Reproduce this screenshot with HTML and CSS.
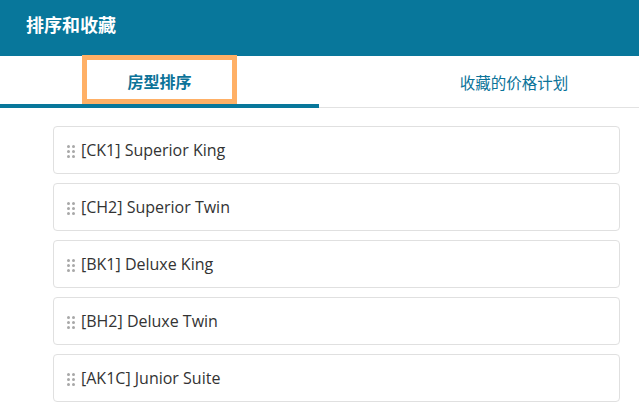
FILE: index.html
```html
<!DOCTYPE html>
<html lang="zh">
<head>
<meta charset="utf-8">
<link rel="stylesheet" href="styles.css">
</head>
<body>
<header class="topbar">排序和收藏</header>
<nav class="tabs">
  <div class="tab active"><span class="tab-label">房型排序</span></div>
  <div class="tab second"><span class="tab-text">收藏的价格计划</span></div>
</nav>
<ul class="list">
  <li class="item"><span class="grip"><i></i><i></i><i></i><i></i><i></i><i></i></span>[CK1] Superior King</li>
  <li class="item"><span class="grip"><i></i><i></i><i></i><i></i><i></i><i></i></span>[CH2] Superior Twin</li>
  <li class="item"><span class="grip"><i></i><i></i><i></i><i></i><i></i><i></i></span>[BK1] Deluxe King</li>
  <li class="item"><span class="grip"><i></i><i></i><i></i><i></i><i></i><i></i></span>[BH2] Deluxe Twin</li>
  <li class="item"><span class="grip"><i></i><i></i><i></i><i></i><i></i><i></i></span>[AK1C] Junior Suite</li>
</ul>
</body>
</html>
```
FILE: styles.css
```css
* { box-sizing: border-box; }
html, body { margin: 0; padding: 0; background: #fff; overflow: hidden; }
body {
  font-family: "Open Sans", "Noto Sans CJK SC", sans-serif;
  width: 639px;
  height: 408px;
}
.topbar {
  height: 56px;
  background: #08779b;
  color: #fff;
  font-family: "Noto Sans CJK SC", sans-serif;
  font-weight: 700;
  font-size: 18px;
  line-height: 20px;
  padding: 14px 0 0 26px;
}
.tabs {
  display: grid;
  grid-template-columns: 319px 320px;
  height: 52px;
  border-bottom: 1px solid #e2e2e2;
}
.tab {
  display: flex;
  justify-content: center;
  color: #0b7399;
  font-family: "Noto Sans CJK SC", sans-serif;
  font-size: 16px;
}
.tab.active {
  border-bottom: 4px solid #08779b;
  margin-bottom: -1px;
  font-weight: 700;
}
.tab-label {
  width: 155px;
  height: 49px;
  border: 5px solid #ffb066;
  margin-top: -1px;
  display: flex;
  align-items: center;
  justify-content: center;
  padding-top: 2px;
}
.tab.second {
  padding-left: 70px;
  align-items: center;
  padding-top: 1px;
  font-size: 15.5px;
}
.list {
  list-style: none;
  margin: 0;
  padding: 18px 19px 0 53px;
  display: flex;
  flex-direction: column;
  gap: 9px;
}
.item {
  height: 48px;
  border: 1px solid #e0e0e0;
  border-radius: 4px;
  display: flex;
  align-items: center;
  padding-left: 13px;
  color: #333;
  font-size: 16px;
}
.grip {
  display: grid;
  grid-template-columns: 3px 3px;
  grid-auto-rows: 3px;
  gap: 2px 2px;
  margin-right: 6px;
  margin-top: 2px;
}
.grip i {
  display: block;
  width: 3px;
  height: 3px;
  border-radius: 50%;
  background: #a8a8a8;
}
```
